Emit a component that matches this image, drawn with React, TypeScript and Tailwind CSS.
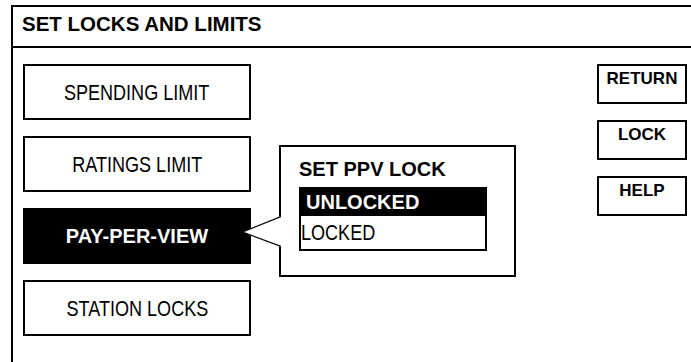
const MENU = [
  { label: 'SPENDING LIMIT', active: false },
  { label: 'RATINGS LIMIT', active: false },
  { label: 'PAY-PER-VIEW', active: true },
  { label: 'STATION LOCKS', active: false },
]

const ACTIONS = ['RETURN', 'LOCK', 'HELP']

// no narrow face installed, so squeeze the regular one
function Narrow({ children, className = '' }: { children: string; className?: string }) {
  return <span className={`inline-block scale-x-[0.82] whitespace-nowrap ${className}`}>{children}</span>
}

export default function App() {
  return (
    <div className="w-[691px] h-[362px] overflow-hidden bg-white text-black font-['Liberation_Sans',Arial,sans-serif]">
      {/* outer frame, runs off the right and bottom edges */}
      <div className="ml-[11px] mt-[5px] w-[720px] h-[400px] border-2 border-black">
        <div className="h-[41px] border-b-2 border-black pl-[9px] pt-[5px] text-[20.5px] font-bold leading-[24px]">
          SET LOCKS AND LIMITS
        </div>

        <div className="flex pl-[10px] pt-[16px]">
          {/* menu column */}
          <div className="flex w-[228px] flex-col gap-4">
            {MENU.map((item) =>
              item.active ? (
                <div
                  key={item.label}
                  className="flex h-[56px] items-center justify-center border-2 border-black bg-black text-[20px] font-bold text-white"
                >
                  {item.label}
                </div>
              ) : (
                <div key={item.label} className="flex h-[56px] items-center justify-center border-2 border-black text-[22px]">
                  <Narrow>{item.label}</Narrow>
                </div>
              )
            )}
          </div>

          {/* ppv lock popup */}
          <div className="relative ml-[28px] mt-[81px] h-[132px] w-[237px] border-2 border-black pl-[18px] pt-[10px]">
            <svg className="absolute left-[-40px] top-[69px]" width="40" height="32" viewBox="0 0 40 32">
              <polygon points="40,0 1.5,16 40,31" fill="#fff" />
              <polyline points="40,0.5 1.5,16 40,30.5" fill="none" stroke="#000" strokeWidth="1.2" />
            </svg>
            <div className="text-[20px] font-bold leading-[24px]">SET PPV LOCK</div>
            <div className="mt-[6px] w-[188px] border-2 border-black">
              <div className="h-[27px] bg-black pl-[5px] text-[20px] font-bold leading-[27px] text-white">UNLOCKED</div>
              <div className="h-[33px] text-[22px] leading-[33px]">
                <Narrow className="origin-left">LOCKED</Narrow>
              </div>
            </div>
          </div>

          {/* action buttons */}
          <div className="ml-[81px] flex w-[90px] flex-col gap-4">
            {ACTIONS.map((a) => (
              <div key={a} className="h-[40px] border-2 border-black pt-[3px] text-center text-[17px] font-bold leading-[20px]">
                {a}
              </div>
            ))}
          </div>
        </div>
      </div>
    </div>
  )
}
